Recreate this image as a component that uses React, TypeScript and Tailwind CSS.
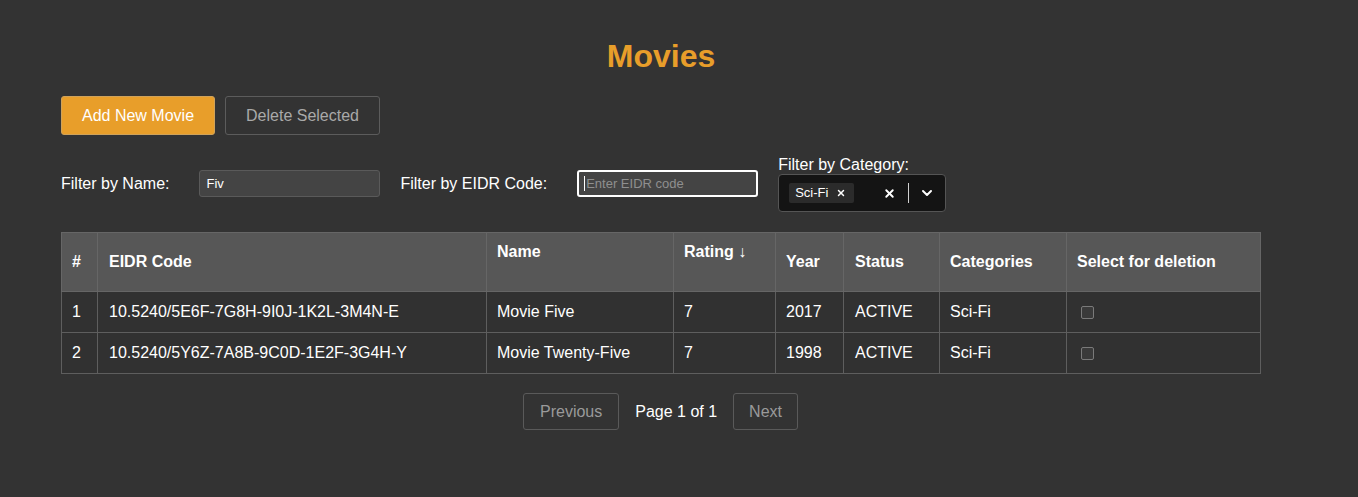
import React from "react";
import { X, ChevronDown } from "lucide-react";

const rows = [
  { id: 1, eidr: "10.5240/5E6F-7G8H-9I0J-1K2L-3M4N-E", name: "Movie Five", rating: 7, year: 2017, status: "ACTIVE", cats: "Sci-Fi" },
  { id: 2, eidr: "10.5240/5Y6Z-7A8B-9C0D-1E2F-3G4H-Y", name: "Movie Twenty-Five", rating: 7, year: 1998, status: "ACTIVE", cats: "Sci-Fi" },
];

export default function App() {
  return (
    <div className="min-h-[497px] w-full bg-[#333333] text-white font-['Liberation_Sans',Arial,sans-serif] text-[16px]">
      <div className="pl-[61px] pt-[38px] w-[1261px]">
        <h1 className="text-center text-[32px] leading-[37px] font-bold text-[#e89e2a]">Movies</h1>

        {/* actions */}
        <div className="mt-[21px] flex gap-[10px]">
          <button className="h-[39px] px-[20px] rounded-[3px] border border-[#cfa25a] bg-[#e89e2a] text-white leading-[19px]">
            Add New Movie
          </button>
          <button className="h-[39px] px-[20px] rounded-[3px] border border-[#5c5c5c] bg-transparent text-[#a9a9a9] leading-[19px]">
            Delete Selected
          </button>
        </div>

        {/* filters */}
        <div className="mt-[20px] flex items-center">
          <label className="mr-[30px] leading-[19px]">Filter by Name:</label>
          <div className="w-[181px] h-[27px] rounded-[3px] border border-[#5a5a5a] bg-[#444444] px-[6px] flex items-center text-[13px] text-white">
            Fiv
          </div>
          <label className="ml-[20px] mr-[30px] leading-[19px]">Filter by EIDR Code:</label>
          <div className="w-[181px] h-[27px] rounded-[3px] border-2 border-white bg-[#444444] px-[5px] flex items-center text-[13px] text-[#8f8f8f]">
            <span className="w-px h-[15px] bg-white mr-px" />
            Enter EIDR code
          </div>
          <div className="ml-[20px] flex flex-col">
            <label className="leading-[19px]">Filter by Category:</label>
            <div className="w-[168px] h-[38px] rounded-[4px] border border-[#555555] bg-[#141414] flex items-center pl-[10px]">
              <span className="h-[20px] pl-[6px] pr-[8px] rounded-[2px] bg-[#2b2b2b] flex items-center gap-[8px] text-[13px] text-white">
                Sci-Fi
                <X className="w-[10px] h-[10px]" strokeWidth={3.5} />
              </span>
              <div className="ml-auto flex items-center">
                <X className="w-[13px] h-[13px] mr-[12px]" strokeWidth={3.5} />
                <span className="w-px h-[20px] bg-[#d0d0d0]" />
                <ChevronDown className="w-[16px] h-[16px] mx-[10px]" strokeWidth={3} />
              </div>
            </div>
          </div>
        </div>

        {/* table */}
        <table className="mt-[20px] w-[1199px] table-fixed border-collapse">
          <colgroup>
            <col className="w-[36px]" />
            <col className="w-[389px]" />
            <col className="w-[187px]" />
            <col className="w-[102px]" />
            <col className="w-[68px]" />
            <col className="w-[96px]" />
            <col className="w-[127px]" />
            <col className="w-[194px]" />
          </colgroup>
          <thead>
            <tr className="h-[59px] bg-[#575757] text-left font-bold">
              <th className="border border-[#666666] px-[10px] align-middle">#</th>
              <th className="border border-[#666666] px-[11px] align-middle">EIDR Code</th>
              <th className="border border-[#666666] px-[10px] pt-[7px] align-top">Name</th>
              <th className="border border-[#666666] px-[10px] pt-[7px] align-top">Rating ↓</th>
              <th className="border border-[#666666] px-[10px] align-middle">Year</th>
              <th className="border border-[#666666] px-[11px] align-middle">Status</th>
              <th className="border border-[#666666] px-[10px] align-middle">Categories</th>
              <th className="border border-[#666666] px-[10px] align-middle">Select for deletion</th>
            </tr>
          </thead>
          <tbody>
            {rows.map((r) => (
              <tr key={r.id} className="h-[41px] bg-[#313131]">
                <td className="border border-[#5e5e5e] px-[10px]">{r.id}</td>
                <td className="border border-[#5e5e5e] px-[11px]">{r.eidr}</td>
                <td className="border border-[#5e5e5e] px-[10px]">{r.name}</td>
                <td className="border border-[#5e5e5e] px-[10px]">{r.rating}</td>
                <td className="border border-[#5e5e5e] px-[10px]">{r.year}</td>
                <td className="border border-[#5e5e5e] px-[11px]">{r.status}</td>
                <td className="border border-[#5e5e5e] px-[10px]">{r.cats}</td>
                <td className="border border-[#5e5e5e] px-[14px]">
                  <span className="block w-[13px] h-[13px] rounded-[2px] border border-[#7a7a7a] bg-[#3a3a3a]" />
                </td>
              </tr>
            ))}
          </tbody>
        </table>

        {/* pagination */}
        <div className="mt-[19px] w-[1199px] flex justify-center items-center gap-[16px]">
          <button className="h-[37px] px-[16px] rounded-[3px] border border-[#5a5a5a] text-[#9a9a9a] leading-[19px]">
            Previous
          </button>
          <span className="leading-[19px]">Page 1 of 1</span>
          <button className="h-[37px] px-[15px] rounded-[3px] border border-[#5a5a5a] text-[#9a9a9a] leading-[19px]">
            Next
          </button>
        </div>
      </div>
    </div>
  );
}
